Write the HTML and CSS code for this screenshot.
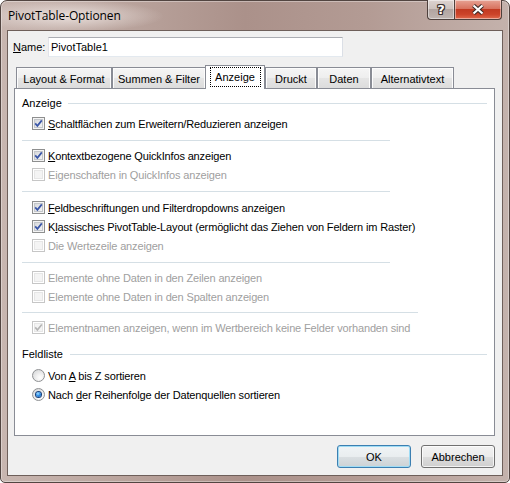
FILE: index.html
```html
<!DOCTYPE html>
<html lang="de">
<head>
<meta charset="utf-8">
<title>PivotTable-Optionen</title>
<link rel="stylesheet" href="styles.css">
</head>
<body>
<div class="window">
  <div class="titlebar">
    <span class="title">PivotTable-Optionen</span>
    <div class="caption">
      <div class="cbtn help"><span class="qm">?</span></div>
      <div class="cbtn close">
        <svg width="14" height="11" viewBox="0 0 14 11"><path d="M2.5 1.5 L11.5 9.5 M11.5 1.5 L2.5 9.5" stroke="#3a2a26" stroke-width="4.2" fill="none"/><path d="M2.5 1.5 L11.5 9.5 M11.5 1.5 L2.5 9.5" stroke="#ffffff" stroke-width="2.2" fill="none"/></svg>
      </div>
    </div>
  </div>
  <div class="client">
    <div class="name-row">
      <span class="name-label"><u>N</u>ame:</span>
      <div class="input">PivotTable1</div>
    </div>
    <div class="tabs">
      <div class="tab w1">Layout &amp; Format</div>
      <div class="tab w2">Summen &amp; Filter</div>
      <div class="tab selected"><span class="focus">Anzeige</span></div>
      <div class="tab w4">Druckt</div>
      <div class="tab w5">Daten</div>
      <div class="tab w6">Alternativtext</div>
    </div>
    <div class="panel">
      <div class="group-title first">Anzeige</div>
      <div class="row first-row"><span class="cb"><svg width="11" height="11" viewBox="0 0 11 11"><path d="M2.2 5.4 L4.4 7.9 L8.8 2.4" fill="none" stroke="#3a56a8" stroke-width="1.7"/></svg></span><span><u>S</u>chaltflächen zum Erweitern/Reduzieren anzeigen</span></div>
      <div class="sep s1"></div>
      <div class="row"><span class="cb"><svg width="11" height="11" viewBox="0 0 11 11"><path d="M2.2 5.4 L4.4 7.9 L8.8 2.4" fill="none" stroke="#3a56a8" stroke-width="1.7"/></svg></span><span><u>K</u>ontextbezogene QuickInfos anzeigen</span></div>
      <div class="row disabled"><span class="cb"></span><span>Eigenschaften in QuickInfos anzeigen</span></div>
      <div class="sep s2"></div>
      <div class="row"><span class="cb"><svg width="11" height="11" viewBox="0 0 11 11"><path d="M2.2 5.4 L4.4 7.9 L8.8 2.4" fill="none" stroke="#3a56a8" stroke-width="1.7"/></svg></span><span><u>F</u>eldbeschriftungen und Filterdropdowns anzeigen</span></div>
      <div class="row"><span class="cb"><svg width="11" height="11" viewBox="0 0 11 11"><path d="M2.2 5.4 L4.4 7.9 L8.8 2.4" fill="none" stroke="#3a56a8" stroke-width="1.7"/></svg></span><span>K<u>l</u>assisches PivotTable-Layout (ermöglicht das Ziehen von Feldern im Raster)</span></div>
      <div class="row disabled"><span class="cb"></span><span>Die Wertezeile anzeigen</span></div>
      <div class="sep s3"></div>
      <div class="row disabled"><span class="cb"></span><span>Elemente ohne Daten in den Zeilen anzeigen</span></div>
      <div class="row disabled"><span class="cb"></span><span>Elemente ohne Daten in den Spalten anzeigen</span></div>
      <div class="sep s4"></div>
      <div class="row disabled"><span class="cb"><svg width="11" height="11" viewBox="0 0 11 11"><path d="M2.2 5.4 L4.4 7.9 L8.8 2.4" fill="none" stroke="#b4b4b4" stroke-width="1.6"/></svg></span><span>Elementnamen anzeigen, wenn im Wertbereich keine Felder vorhanden sind</span></div>
      <div class="group-title second">Feldliste</div>
      <div class="row radio-first"><span class="rb"></span><span>Von <u>A</u> bis Z sortieren</span></div>
      <div class="row"><span class="rb on"><span class="dot"></span></span><span>Nach <u>d</u>er Reihenfolge der Datenquellen sortieren</span></div>
    </div>
    <div class="buttons">
      <button class="btn default">OK</button>
      <button class="btn">Abbrechen</button>
    </div>
  </div>
</div>
</body>
</html>
```

FILE: styles.css
```css
html, body {
  margin: 0;
  padding: 0;
  background: #ffffff;
}

body {
  font-family: "Liberation Sans", Arial, sans-serif;
  font-size: 11px;
  color: #000;
}

u {
  text-decoration: underline;
  text-underline-offset: 1px;
}

.window {
  width: 510px;
  height: 483px;
  box-sizing: border-box;
  border: 1px solid #524541;
  border-radius: 7px 7px 5px 5px;
  padding: 0 6px 6px;
  display: flex;
  flex-direction: column;
  background:
    linear-gradient(90deg, #c8b6b0 0%, #b9a39c 25%, #ab918a 48%, #b39b94 72%, #c4b2ac 100%);
  box-shadow: inset 0 0 0 1px rgba(255, 255, 255, 0.35);
}

.titlebar {
  height: 29px;
  margin: 0 -6px;
  padding: 0 7px;
  display: flex;
  align-items: center;
  background: radial-gradient(ellipse 95px 16px at 68px 15px, rgba(240, 232, 229, 0.85), rgba(240, 232, 229, 0) 100%);
}

.title {
  flex: 1;
  font-family: "Open Sans", "Noto Sans", sans-serif;
  font-size: 12px;
  color: #000;
  letter-spacing: -0.1px;
}

.caption {
  display: flex;
  align-self: flex-start;
  margin-top: -1px;
}

.cbtn {
  height: 20px;
  box-sizing: border-box;
  border: 1px solid #4e403c;
  border-top: none;
  display: flex;
  align-items: center;
  justify-content: center;
  box-shadow: inset 0 0 0 1px rgba(255, 255, 255, 0.45);
}

.help {
  width: 27px;
  border-radius: 0 0 0 4px;
  border-right: none;
  background: linear-gradient(#ddd3d0 0%, #cdc2be 45%, #b2a5a1 50%, #bfb4b0 100%);
}

.qm {
  font-family: "DejaVu Sans", sans-serif;
  font-weight: bold;
  font-size: 13px;
  color: #fff;
  line-height: 1;
  text-shadow: 1px 0 #3a2e2b, -1px 0 #3a2e2b, 0 1px #3a2e2b, 0 -1px #3a2e2b, 1px 1px #3a2e2b, -1px -1px #3a2e2b, 1px -1px #3a2e2b, -1px 1px #3a2e2b;
}

.close {
  width: 48px;
  border-radius: 0 0 4px 0;
  background: linear-gradient(#e7a394 0%, #d8735f 45%, #c23b22 50%, #cc4329 75%, #e06a4c 100%);
}

.client {
  flex: 1;
  box-sizing: border-box;
  border: 1px solid #6e5f5a;
  background: #f0f0f0;
  padding: 0 7px 0 5px;
  display: flex;
  flex-direction: column;
}

.name-row {
  display: flex;
  align-items: center;
  height: 20px;
  margin-top: 6px;
}

.name-label {
  width: 35px;
}

.input {
  width: 295px;
  height: 20px;
  box-sizing: border-box;
  border: 1px solid;
  border-color: #abadb3 #dbdfe6 #e3e9ef #e2e3ea;
  background: #fff;
  padding-left: 2px;
  display: flex;
  align-items: center;
}

.tabs {
  display: flex;
  align-items: flex-end;
  height: 23px;
  margin-top: 8px;
  margin-left: 3px;
}

.tab {
  height: 21px;
  box-sizing: border-box;
  border: 1px solid #898c95;
  border-bottom: none;
  background: linear-gradient(#f5f5f5 0%, #eeeeee 50%, #e5e5e5 51%, #dcdcdc 100%);
  box-shadow: inset 1px 1px 0 #fcfcfc, inset -1px 0 0 #fcfcfc;
  display: flex;
  align-items: center;
  justify-content: center;
  padding-top: 1px;
}

.w1 { width: 96px; }
.w2 { width: 94px; }
.w4 { width: 52px; }
.w5 { width: 54px; }
.w6 { width: 83px; }

.tab.selected {
  width: 60px;
  height: 24px;
  margin-left: -1px;
  margin-bottom: -1px;
  background: #fff;
  box-shadow: none;
  position: relative;
  z-index: 1;
  padding-top: 0;
  align-items: flex-start;
}

.focus {
  margin-top: 1px;
  width: 51px;
  height: 20px;
  box-sizing: border-box;
  border: 1px dotted #000;
  display: flex;
  align-items: center;
  justify-content: center;
  padding-bottom: 1px;
}

.panel {
  height: 348px;
  box-sizing: border-box;
  margin-left: 1px;
  border: 1px solid #898c95;
  background: #fff;
  padding: 0 7px;
  display: flex;
  flex-direction: column;
}

.group-title {
  display: flex;
  align-items: center;
  height: 14px;
}

.group-title::after {
  content: "";
  flex: 1;
  height: 1px;
  background: #d5dfe5;
  margin-left: 6px;
}

.group-title.first { margin-top: 7px; }
.group-title.second { margin-top: 10px; }
.group-title.second::after { margin-left: 7px; }

.row {
  display: flex;
  align-items: center;
  height: 19px;
  padding-left: 10px;
  gap: 3px;
  letter-spacing: -0.15px;
  white-space: nowrap;
}

.row.first-row { margin-top: 4px; }
.row.radio-first { margin-top: 5px; }

.row.disabled { color: #a0a0a0; }

.sep {
  height: 1px;
  background: #d5dfe5;
  width: 368px;
}

.s1 { margin: 7px 0 5px; }
.s2 { margin: 7px 0 6px; }
.s3 { margin: 7px 0 5px; }
.s4 { margin: 6px 0 5px; width: 396px; }

.cb {
  flex: none;
  width: 13px;
  height: 13px;
  box-sizing: border-box;
  border: 1px solid #8e8f8f;
  background: linear-gradient(135deg, #cdd0d4 0%, #e6e7e9 50%, #f9f9f9 100%);
  box-shadow: inset 0 0 0 1px #f4f4f4, inset 0 0 0 2px #c3c6ca;
  display: flex;
}

.row.disabled .cb {
  border-color: #c6c6c6;
  background: #f4f4f4;
  box-shadow: inset 0 0 0 1px #ffffff, inset 0 0 0 2px #e6e6e6;
}

.rb {
  flex: none;
  width: 13px;
  height: 13px;
  box-sizing: border-box;
  border-radius: 50%;
  border: 1px solid #8f9193;
  background: radial-gradient(circle at 65% 70%, #ffffff 0%, #f1f1f1 35%, #cfd1d3 100%);
  display: flex;
  align-items: center;
  justify-content: center;
}

.rb .dot {
  width: 5px;
  height: 5px;
  border-radius: 50%;
  background: radial-gradient(circle at 40% 35%, #a9e2ff 0%, #2d8de6 45%, #0b4ea6 100%);
  box-shadow: 0 0 0 1px #1a3f78;
}

.buttons {
  display: flex;
  justify-content: flex-end;
  gap: 10px;
  margin-top: 9px;
}

.btn {
  width: 74px;
  height: 23px;
  box-sizing: border-box;
  border: 1px solid #707070;
  border-radius: 3px;
  background: linear-gradient(#f2f2f2 0%, #ebebeb 50%, #dddddd 51%, #cfcfcf 100%);
  box-shadow: inset 0 0 0 1px rgba(255, 255, 255, 0.75);
  font-family: "Liberation Sans", Arial, sans-serif;
  font-size: 11px;
  color: #000;
  padding: 0;
  margin: 0;
}

.btn.default {
  border-color: #3c7fb1;
  box-shadow: inset 0 0 0 1px #9fdcf5;
  background: linear-gradient(#f0f4f6 0%, #e9edef 50%, #dadfe2 51%, #ccd2d5 100%);
}
```
